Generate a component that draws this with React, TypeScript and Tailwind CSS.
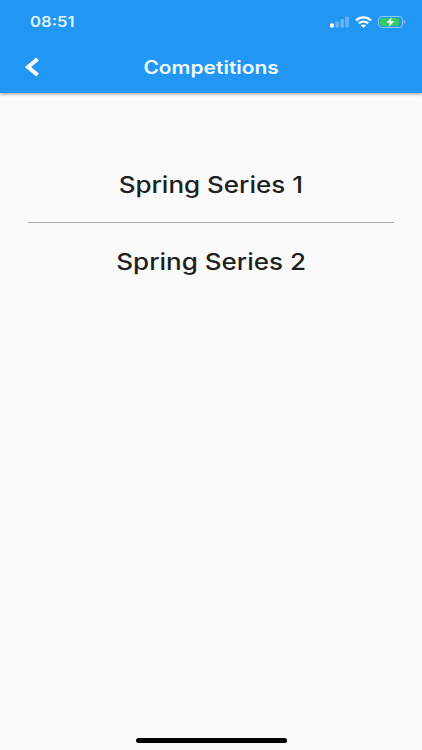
import clsx from 'clsx'

const COMPETITIONS = ['Spring Series 1', 'Spring Series 2']

// Main Component

export default function App() {
  return (
    <div className="flex h-[750px] w-[422px] flex-col overflow-hidden bg-[#fafafa] font-['Inter','Liberation_Sans',sans-serif]">
      <header className="z-10 h-[93px] shrink-0 bg-[#2196f3] text-white shadow-[0_1px_3px_rgba(0,0,0,0.4)]">
        <StatusBar />
        <NavBar title="Competitions" />
      </header>

      <main className="flex-1 px-[28px] pt-[53px]">
        <ul>
          {COMPETITIONS.map((name, i) => (
            <li
              key={name}
              className={clsx(
                'flex items-center justify-center',
                i < COMPETITIONS.length - 1
                  ? 'h-[77px] border-b border-[#a6a6a6] pt-[2px]'
                  : 'h-[78px]'
              )}
            >
              <span className="origin-center scale-x-[1.155] whitespace-nowrap text-[22.5px] font-medium text-[#1f1f1f]">
                {name}
              </span>
            </li>
          ))}
        </ul>
      </main>

      <footer className="flex h-[12px] shrink-0 justify-center">
        <div className="h-[5px] w-[151px] rounded-full bg-black" />
      </footer>
    </div>
  )
}

function StatusBar() {
  return (
    <div className="flex h-[43px] items-center justify-between pr-[16px] pl-[30px]">
      <span className="origin-left scale-x-[1.19] text-[14px] font-semibold text-[#e3f4ff]">
        08:51
      </span>
      <div className="flex items-center gap-[6px]">
        <SignalIcon />
        <WifiIcon />
        <BatteryIcon />
      </div>
    </div>
  )
}

function NavBar({ title }: { title: string }) {
  return (
    <div className="grid h-[48px] grid-cols-[1fr_auto_1fr] items-center">
      <button type="button" aria-label="Back" className="pl-[24px]">
        <BackIcon />
      </button>
      <h1 className="scale-x-[1.165] text-[18px] font-semibold text-[#f1faff]">{title}</h1>
    </div>
  )
}

// -- Icons

function BackIcon() {
  return (
    <svg width="16" height="20" viewBox="0 0 16 20" fill="none" stroke="white" strokeWidth="4">
      <path d="M13.6 2 4 10l9.6 8" />
    </svg>
  )
}

function SignalIcon() {
  return (
    <svg width="20" height="12" viewBox="0 0 20 12" fill="white">
      <rect x="1" y="7.5" width="4" height="4" rx="0.8" />
      <g opacity="0.3">
        <rect x="6.5" y="5.5" width="3.6" height="6" rx="0.8" />
        <rect x="11.4" y="3" width="3.6" height="8.5" rx="0.8" />
        <rect x="16.3" y="0.5" width="3.6" height="11" rx="0.8" />
      </g>
    </svg>
  )
}

function WifiIcon() {
  return (
    <svg width="17" height="12" viewBox="0 0 17 12" fill="none" stroke="white" strokeWidth="2.2">
      <path d="M1 4.4C5.2.3 11.8.3 16 4.4" />
      <path d="M3.8 7.4c2.7-2.5 6.7-2.5 9.4 0" />
      <path d="M8.5 11.8 5.7 9.4c1.5-1.3 4.1-1.3 5.6 0Z" fill="white" stroke="none" />
    </svg>
  )
}

function BatteryIcon() {
  return (
    <svg width="28" height="12" viewBox="0 0 28 12">
      <rect x="0.5" y="0.5" width="24" height="11" rx="3" fill="none" stroke="#8cc8fa" />
      <rect x="2" y="2" width="19" height="8" rx="1.8" fill="#35cb67" />
      <path d="M26 4v4c1.6-.8 1.6-3.2 0-4Z" fill="#8cc8fa" />
      <path d="m13.8 1-5.3 5.7h3.3L10.8 11l5.7-6h-3.7Z" fill="white" />
    </svg>
  )
}
